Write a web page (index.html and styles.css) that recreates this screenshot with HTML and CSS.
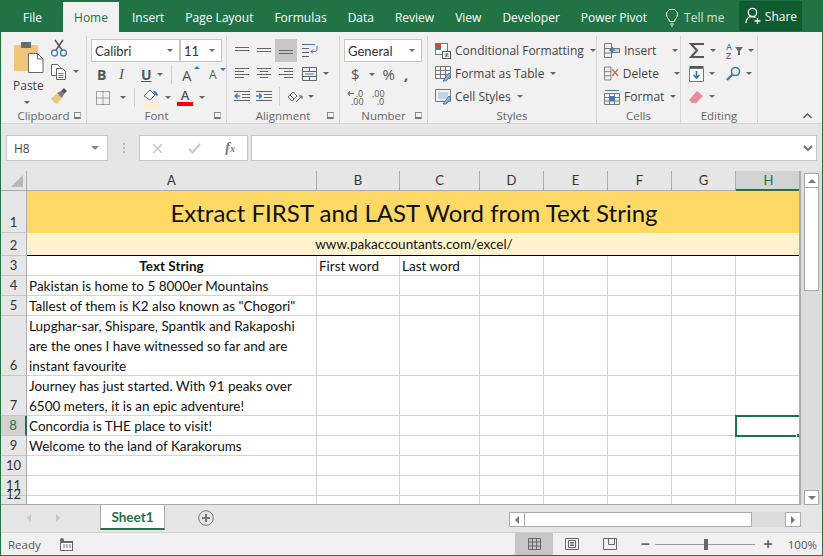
FILE: index.html
```html
<!DOCTYPE html>
<html lang="en">
<head>
    <meta charset="UTF-8">
    <title>Extract FIRST and LAST Word - Excel</title>
    <link rel="stylesheet" href="styles.css">
</head>
<body>
<div class="window">

    <div class="tabs">
        <span class="tab tab-file">File</span>
        <span class="tab tab-active">Home</span>
        <span class="tab">Insert</span>
        <span class="tab">Page Layout</span>
        <span class="tab">Formulas</span>
        <span class="tab">Data</span>
        <span class="tab">Review</span>
        <span class="tab">View</span>
        <span class="tab">Developer</span>
        <span class="tab">Power Pivot</span>
        <span class="tab tab-tell">
            <svg width="14" height="18" viewBox="0 0 14 18" fill="none" stroke="#fff"><path d="M4.5 12.5c0-2.500-3-3.500-3-7a5.500 5.500 0 0 1 11 0c0 3.500-3 4.500-3 7z"/><path d="M5 15h4M6 17h2"/></svg>
            Tell me
        </span>
        <span class="share">
            <svg width="16" height="18" viewBox="0 0 16 18" fill="none" stroke="#fff" stroke-width="1.300"><circle cx="7.500" cy="5.500" r="4.200"/><path d="M1 16c0-4 2.500-6.500 6-6.500 1.500 0 2.500.4 3.500 1"/><path d="M12.500 11v6M9.500 14h6"/></svg>
            Share
        </span>
    </div>

    <div class="ribbon">
        <div class="group g-clipboard">
            <div class="group-body clip-body">
                <div class="paste">
                    <svg width="30" height="32" viewBox="0 0 30 32"><rect x="0" y="3" width="24" height="26" rx="1" fill="#eec77c"/><rect x="7" y="0" width="10" height="6" fill="#6b6b6b"/><path d="M14.500 11.500h9l5.500 5.500v13.500h-14.500z" fill="#fff" stroke="#6b6b6b"/><path d="M23.500 11.500v5.500h5.500" fill="none" stroke="#6b6b6b"/></svg>
                    <span>Paste</span>
                    <i class="caret"></i>
                </div>
                <div class="clip-tools">
                    <span class="tool">
                        <svg width="16" height="18" viewBox="0 0 16 18" fill="none"><path d="M4 1l7 10M12 1L5 11" stroke="#555" stroke-width="1.500"/><circle cx="3.500" cy="14" r="3" stroke="#3f7cba" stroke-width="1.300"/><circle cx="12.500" cy="14" r="3" stroke="#3f7cba" stroke-width="1.300"/></svg>
                    </span>
                    <span class="tool">
                        <svg width="16" height="16" viewBox="0 0 16 16" fill="#fff" stroke="#666"><path d="M.5.500h6l3 3v8h-9z"/><path d="M5.500 4.500h6l3 3v8h-9z"/><path d="M7.500 9.500h5M7.500 11.500h5M7.500 13.500h5" stroke="#3f7cba"/></svg>
                        <i class="caret caret-copy"></i>
                    </span>
                    <span class="tool">
                        <svg width="17" height="16" viewBox="0 0 17 16"><path d="M0 11l6-6 5 5-5 6c-2-1-4-3-6-5z" fill="#eec77c"/><path d="M6 5l4-2 3 3-2 4z" fill="#777"/><path d="M10 3l3-3 3 3-3 3z" fill="#555"/></svg>
                    </span>
                </div>
            </div>
            <div class="group-label">Clipboard<i class="launcher"></i></div>
        </div>

        <div class="group g-font">
            <div class="group-body font-body">
                <div class="row combo-row">
                    <span class="combo combo-font">Calibri<i class="caret"></i></span>
                    <span class="combo combo-size">11<i class="caret"></i></span>
                </div>
                <div class="row font-row2">
                    <b class="glyph">B</b>
                    <em class="glyph glyph-i">I</em>
                    <u class="glyph">U</u>
                    <i class="caret caret-u"></i>
                    <span class="vsep"></span>
                    <span class="size-a">A<i class="tri tri-up"></i></span>
                    <span class="size-a size-a-small">A<i class="tri tri-down"></i></span>
                </div>
                <div class="row font-row3">
                    <svg width="14" height="14" viewBox="0 0 14 14" fill="none" stroke="#555" stroke-dasharray="1 1"><path d="M.5.500h13v13H.500zM7 .5v13M.5 7h13"/></svg>
                    <i class="caret caret-border"></i>
                    <span class="vsep"></span>
                    <svg class="fill-icon" width="18" height="19" viewBox="0 0 18 19"><path d="M2 8l6-6 5 5-5 5z" fill="#fff" stroke="#666"/><path d="M11 3c3 0 5 2 5 5l-3-1z" fill="#3f7cba"/><rect y="15" width="17" height="4" fill="#fdefc8"/></svg>
                    <i class="caret caret-fill"></i>
                    <span class="font-color">A</span>
                    <i class="caret caret-color"></i>
                </div>
            </div>
            <div class="group-label">Font<i class="launcher"></i></div>
        </div>

        <div class="group g-align">
            <div class="group-body align-body">
                <span class="cell-icon"><svg width="14" height="8" viewBox="0 0 14 8" stroke="#666"><path d="M0 .5h14M0 3.500h14"/></svg></span>
                <span class="cell-icon"><svg width="14" height="8" viewBox="0 0 14 8" stroke="#666"><path d="M0 1.500h14M0 4.500h14"/></svg></span>
                <span class="cell-icon cell-on"><svg width="14" height="8" viewBox="0 0 14 8" stroke="#666"><path d="M0 3.500h14M0 6.500h14"/></svg></span>
                <span class="cell-icon cell-wide">
                    <svg width="16" height="15" viewBox="0 0 16 15" fill="none" stroke="#666"><path d="M0 1.500h10M0 5.500h7M0 9.500h7M0 13.500h7"/><path d="M5 1.500h8" stroke="#3f7cba"/><path d="M15 3v3.500a2 2 0 0 1-2 2H9M11 6.500l-2 2 2 2" stroke="#3f7cba"/></svg>
                </span>

                <span class="cell-icon"><svg width="14" height="11" viewBox="0 0 14 11" stroke="#666"><path d="M0 .5h14M0 3.500h9M0 6.500h14M0 9.500h9"/></svg></span>
                <span class="cell-icon"><svg width="14" height="11" viewBox="0 0 14 11" stroke="#666"><path d="M0 .5h14M3 3.500h8M0 6.500h14M3 9.500h8"/></svg></span>
                <span class="cell-icon"><svg width="14" height="11" viewBox="0 0 14 11" stroke="#666"><path d="M0 .5h14M5 3.500h9M0 6.500h14M5 9.500h9"/></svg></span>
                <span class="cell-icon cell-wide">
                    <svg width="15" height="14" viewBox="0 0 15 14" fill="none" stroke="#666"><path d="M.5.500h14v13H.500zM.5 4.500h14M.5 9.500h14M7.500.5v4M7.500 9.500v4"/><path d="M3 7h9" stroke="#3f7cba"/></svg>
                    <i class="caret caret-merge"></i>
                </span>

                <span class="cell-icon"><svg width="16" height="11" viewBox="0 0 16 11" fill="none" stroke="#666"><path d="M0 .5h16M8 3.500h8M8 6.500h8M0 9.500h16"/><path d="M6 5H1M3.500 2.500L1 5l2.500 2.500" stroke="#3f7cba" stroke-width="1.300"/></svg></span>
                <span class="cell-icon"><svg width="16" height="11" viewBox="0 0 16 11" fill="none" stroke="#666"><path d="M0 .5h16M8 3.500h8M8 6.500h8M0 9.500h16"/><path d="M0 5h5M3 2.500L5.500 5 3 7.500" stroke="#3f7cba" stroke-width="1.300"/></svg></span>
                <span class="orient">
                    <span class="vsep"></span>
                    <svg width="16" height="15" viewBox="0 0 16 15" fill="none" stroke="#666"><path d="M1 8l5-5 4 4-5 5zM3 6l4 4"/><path d="M9 13l6-6M12 7h3v3" stroke="#555"/></svg>
                    <i class="caret caret-orient"></i>
                </span>
            </div>
            <div class="group-label">Alignment<i class="launcher"></i></div>
        </div>

        <div class="group g-number">
            <div class="group-body number-body">
                <span class="combo combo-general">General<i class="caret"></i></span>
                <div class="row number-row2">
                    <span class="num-sign">$</span>
                    <i class="caret caret-dollar"></i>
                    <span class="num-sign num-pct">%</span>
                    <span class="num-sign num-comma">,</span>
                </div>
                <div class="row number-row3">
                    <svg width="15" height="15" viewBox="0 0 15 15" fill="none" stroke="#3f7cba" stroke-width="1.200"><path d="M7 3.500H1M3 1.500l-2 2 2 2"/></svg>
                    <span class="decimals"><span>&nbsp;&nbsp;.0</span><span>.00</span></span>
                    <span class="decimals decimals-b"><span>.00</span><span>&nbsp;&nbsp;.0</span></span>
                </div>
            </div>
            <div class="group-label">Number<i class="launcher"></i></div>
        </div>

        <div class="group g-styles">
            <div class="group-body list-body">
                <span class="list-item">
                    <svg width="16" height="16" viewBox="0 0 16 16" fill="none"><rect x=".5" y=".5" width="12" height="11" stroke="#777" fill="#fff"/><rect x="1" y="1" width="5" height="3" fill="#d24726"/><rect x="1" y="4" width="5" height="3" fill="#3f7cba"/><rect x="7.500" y="8.500" width="8" height="7" fill="#fff" stroke="#555"/><path d="M9.500 11h4M9.500 13h4M12.500 10l-2 4.500" stroke="#555" stroke-width=".8"/></svg>
                    Conditional Formatting<i class="caret caret-list"></i>
                </span>
                <span class="list-item">
                    <svg width="16" height="16" viewBox="0 0 16 16" fill="none" stroke="#777"><path d="M.5.500h15v12H.500zM.5 4.500h15M.5 8.500h15M5.500.5v12M10.500.5v12"/><path d="M8 15l6-8 2 2-5 6z" fill="#8fb3d9" stroke="#3f7cba"/></svg>
                    Format as Table<i class="caret caret-list"></i>
                </span>
                <span class="list-item">
                    <svg width="16" height="16" viewBox="0 0 16 16" fill="none" stroke="#777"><path d="M.5.500h15v12H.500z"/><rect x="3" y="3" width="10" height="7" fill="#c3d3e6" stroke="none"/><path d="M8 15l6-8 2 2-5 6z" fill="#8fb3d9" stroke="#3f7cba"/></svg>
                    Cell Styles<i class="caret caret-list"></i>
                </span>
            </div>
            <div class="group-label">Styles</div>
        </div>

        <div class="group g-cells">
            <div class="group-body list-body">
                <span class="list-item">
                    <svg width="16" height="15" viewBox="0 0 16 15" fill="none" stroke="#777"><path d="M.5.500h7v14h-7zM.5 5.500h7M.5 10h7"/><rect x="8.500" y="5.500" width="7" height="4" fill="#c3d3e6"/><path d="M9 4L6 7l3 3M6 7h5" stroke="#3f7cba" stroke-width="1.300"/></svg>
                    Insert<i class="caret caret-insert"></i>
                </span>
                <span class="list-item">
                    <svg width="16" height="15" viewBox="0 0 16 15" fill="none" stroke="#777"><path d="M.5.500h7v14h-7zM.5 5.500h7M.5 10h7"/><path d="M9 3l6 7M15 3l-6 7" stroke="#d2683c" stroke-width="1.500"/></svg>
                    Delete<i class="caret caret-delete"></i>
                </span>
                <span class="list-item">
                    <svg width="16" height="16" viewBox="0 0 16 16" fill="none" stroke="#777"><path d="M.5 4.500h15v11H.500zM.5 8.500h15M.5 12h15M5.500 4.500v11M10.500 4.500v11"/><rect x="5" y="7" width="6" height="5" fill="#3f7cba" stroke="none"/><path d="M1 1.500h14" stroke="#3f7cba"/></svg>
                    Format<i class="caret caret-list"></i>
                </span>
            </div>
            <div class="group-label">Cells</div>
        </div>

        <div class="group g-editing">
            <div class="group-body edit-body">
                <span class="edit-item">
                    <svg width="16" height="15" viewBox="0 0 16 15" fill="none" stroke="#555" stroke-width="2"><path d="M15 1H2l6 6.500L2 14h13"/></svg>
                    <i class="caret"></i>
                </span>
                <span class="edit-item">
                    <span class="az"><span class="az-a">A</span><span class="az-z">Z</span></span>
                    <svg width="8" height="8" viewBox="0 0 8 8"><path d="M0 0h8L5 4v4H3V4z" fill="#666"/></svg>
                    <i class="caret"></i>
                </span>
                <span class="edit-item">
                    <svg width="15" height="16" viewBox="0 0 15 16" fill="#fff" stroke="#777"><path d="M.5 2.500h14v13H.500z"/><path d="M.5 1h14" stroke="#555" stroke-width="2"/><path d="M7.500 5v7M4.500 9l3 3 3-3" fill="none" stroke="#2f6fb3" stroke-width="1.600"/></svg>
                    <i class="caret"></i>
                </span>
                <span class="edit-item">
                    <svg width="15" height="15" viewBox="0 0 15 15" fill="none" stroke="#3f7cba" stroke-width="1.600"><circle cx="9.500" cy="5.500" r="4"/><path d="M6.500 8.500L1 14" stroke-width="2.400"/></svg>
                    <i class="caret"></i>
                </span>
                <span class="edit-item">
                    <svg width="15" height="14" viewBox="0 0 15 14"><path d="M0 10l8-9 6 5-7 7H3z" fill="#ea8a9a"/></svg>
                    <i class="caret"></i>
                </span>
            </div>
            <div class="group-label">Editing</div>
        </div>

        <div class="collapse">
            <svg width="9" height="6" viewBox="0 0 9 6" fill="none" stroke="#666" stroke-width="1.600"><path d="M.5 5L4.500 1l4 4"/></svg>
        </div>
    </div>

    <div class="formula-bar">
        <div class="name-box">H8<i class="caret"></i></div>
        <div class="grip"><i></i><i></i><i></i></div>
        <div class="fx-box">
            <svg width="11" height="11" viewBox="0 0 11 11" fill="none" stroke="#c8c8c8" stroke-width="1.500"><path d="M1 1l9 9M10 1l-9 9"/></svg>
            <svg width="13" height="11" viewBox="0 0 13 11" fill="none" stroke="#c8c8c8" stroke-width="2"><path d="M1 6l3.500 3.500L12 1"/></svg>
            <span class="fx">f<small>x</small></span>
        </div>
        <div class="formula-input">
            <svg width="10" height="7" viewBox="0 0 10 7" fill="none" stroke="#777" stroke-width="2"><path d="M1 1l4 4 4-4"/></svg>
        </div>
    </div>

    <div class="sheet-wrap">
        <div class="sheet">
            <div class="corner"><i></i></div>
            <div class="col">A</div><div class="col">B</div><div class="col">C</div><div class="col">D</div><div class="col">E</div><div class="col">F</div><div class="col">G</div><div class="col col-on">H</div>

            <div class="rowh">1</div>
            <div class="title-cell">Extract FIRST and LAST Word from Text String</div>

            <div class="rowh">2</div>
            <div class="url-cell">www.pakaccountants.com/excel/</div>

            <div class="rowh">3</div>
            <div class="c head">Text String</div><div class="c">First word</div><div class="c">Last word</div><div class="c"></div><div class="c"></div><div class="c"></div><div class="c"></div><div class="c"></div>

            <div class="rowh">4</div>
            <div class="c">Pakistan is home to 5 8000er Mountains</div><div class="c"></div><div class="c"></div><div class="c"></div><div class="c"></div><div class="c"></div><div class="c"></div><div class="c"></div>

            <div class="rowh">5</div>
            <div class="c">Tallest of them is K2 also known as "Chogori"</div><div class="c"></div><div class="c"></div><div class="c"></div><div class="c"></div><div class="c"></div><div class="c"></div><div class="c"></div>

            <div class="rowh">6</div>
            <div class="c">Lupghar-sar, Shispare, Spantik and Rakaposhi are the ones I have witnessed so far and are instant favourite</div><div class="c"></div><div class="c"></div><div class="c"></div><div class="c"></div><div class="c"></div><div class="c"></div><div class="c"></div>

            <div class="rowh">7</div>
            <div class="c">Journey has just started. With 91 peaks over 6500 meters, it is an epic adventure!</div><div class="c"></div><div class="c"></div><div class="c"></div><div class="c"></div><div class="c"></div><div class="c"></div><div class="c"></div>

            <div class="rowh rowh-on">8</div>
            <div class="c">Concordia is THE place to visit!</div><div class="c"></div><div class="c"></div><div class="c"></div><div class="c"></div><div class="c"></div><div class="c"></div><div class="c selected"><i class="handle"></i></div>

            <div class="rowh">9</div>
            <div class="c">Welcome to the land of Karakorums</div><div class="c"></div><div class="c"></div><div class="c"></div><div class="c"></div><div class="c"></div><div class="c"></div><div class="c"></div>

            <div class="rowh">10</div>
            <div class="c"></div><div class="c"></div><div class="c"></div><div class="c"></div><div class="c"></div><div class="c"></div><div class="c"></div><div class="c"></div>

            <div class="rowh">11</div>
            <div class="c"></div><div class="c"></div><div class="c"></div><div class="c"></div><div class="c"></div><div class="c"></div><div class="c"></div><div class="c"></div>

            <div class="rowh">12</div>
            <div class="c"></div><div class="c"></div><div class="c"></div><div class="c"></div><div class="c"></div><div class="c"></div><div class="c"></div><div class="c"></div>
        </div>
        <div class="vscroll">
            <span class="sb-btn"><i class="tri-sb tri-sb-up"></i></span>
            <span class="vthumb"></span>
            <span class="sb-btn sb-down"><i class="tri-sb tri-sb-down"></i></span>
        </div>
    </div>

    <div class="sheet-tabs">
        <i class="nav nav-l"></i>
        <i class="nav nav-r"></i>
        <span class="sheet-tab">Sheet1</span>
        <svg class="add-sheet" width="16" height="16" viewBox="0 0 16 16" fill="none" stroke="#777"><circle cx="8" cy="8" r="7.300"/><path d="M8 4v8M4 8h8" stroke-width="2"/></svg>
        <div class="hscroll">
            <span class="sb-btn-h"><i class="tri-sb tri-sb-left"></i></span>
            <span class="hthumb"></span>
            <span class="sb-btn-h sb-right"><i class="tri-sb tri-sb-right"></i></span>
        </div>
    </div>

    <div class="status">
        <span class="ready">Ready</span>
        <svg class="macro" width="13" height="13" viewBox="0 0 13 13"><path d="M0 3h13v10H0z" fill="#666"/><path d="M1 5h11v7H1z" fill="#fff"/><rect width="4" height="4" rx="2" x="0" fill="#666"/><path d="M3 7h2M6 7h2M9 7h2M3 9h2M6 9h2M9 9h2" stroke="#666"/></svg>
        <div class="views">
            <span class="view view-on"><svg width="13" height="12" viewBox="0 0 13 12" fill="none" stroke="#666"><path d="M.5.500h12v11H.500zM.5 4h12M.5 8h12M4.500.5v11M8.500.5v11"/></svg></span>
            <span class="view"><svg width="14" height="12" viewBox="0 0 14 12" fill="none" stroke="#666"><path d="M.5.500h13v11H.500zM3.500 2.500h7v7h-7zM5 4.500h4M5 6h4M5 7.500h4"/></svg></span>
            <span class="view"><svg width="14" height="12" viewBox="0 0 14 12" fill="none" stroke="#666"><path d="M.5 11.500V.5h13v11zM5.500.5v6h6V.5"/></svg></span>
        </div>
        <span class="zoom-btn">&minus;</span>
        <div class="zoom-track"><i></i></div>
        <span class="zoom-btn">+</span>
        <span class="zoom-val">100%</span>
    </div>
</div>
</body>
</html>
```

FILE: styles.css
```css
* {
    box-sizing: border-box;
}

body {
    margin: 0;
    overflow: hidden;
    background-color: #e6e6e6;
    font-family: "Open Sans", "Noto Sans", sans-serif;
    font-size: 12px;
    color: #444;
}

i {
    font-style: normal;
}

.window {
    width: 823px;
    height: 556px;
    display: flex;
    flex-direction: column;
    border-left: 1px solid #217346;
    border-right: 1px solid #217346;
    border-bottom: 1px solid #217346;
}

/* tab strip */
.tabs {
    height: 32px;
    flex: none;
    margin: 0 -1px;
    display: flex;
    align-items: flex-end;
    background-color: #217346;
    color: #fff;
    font-size: 12px;
}
.tab {
    height: 30px;
    padding-top: 7px;
    margin-right: 21px;
    white-space: nowrap;
}
.tab-file {
    margin-left: 23px;
    margin-right: 22px;
}
.tab-active {
    width: 56px;
    margin-left: -1px;
    margin-right: 13px;
    text-align: center;
    background-color: #f1f1f1;
    color: #217346;
}
.tab-tell {
    display: flex;
    align-items: flex-start;
    gap: 5px;
    margin-left: -3px;
    margin-right: 15px;
    color: #d5e6dc;
}
.share {
    width: 63px;
    height: 30px;
    margin-bottom: 1px;
    display: flex;
    align-items: center;
    justify-content: center;
    gap: 4px;
    background-color: #0f5c30;
}

/* ribbon */
.ribbon {
    height: 92px;
    flex: none;
    display: flex;
    background-color: #f1f1f1;
    border-bottom: 1px solid #d6d6d6;
    position: relative;
}
.group {
    display: flex;
    flex-direction: column;
    padding-top: 3px;
    height: 88px;
    margin-top: 4px;
    border-right: 1px solid #d4d4d4;
    flex: none;
}
.g-clipboard { width: 86px; }
.g-font { width: 140px; }
.g-align { width: 113px; }
.g-number { width: 88px; }
.g-styles { width: 169px; }
.g-cells { width: 84px; }
.g-editing { width: 77px; }
.group-body {
    height: 71px;
    flex: none;
}
.group-label {
    position: relative;
    height: 14px;
    line-height: 14px;
    text-align: center;
    color: #666;
    font-size: 11.500px;
    margin-top: -1px;
}
.launcher {
    position: absolute;
    right: 5px;
    top: 3px;
    width: 7px;
    height: 7px;
    border-left: 1px solid #888;
    border-top: 1px solid #888;
    border-right: 1px solid #bbb;
    border-bottom: 2px solid #777;
}
.caret {
    display: inline-block;
    width: 0;
    height: 0;
    border-left: 3px solid transparent;
    border-right: 3px solid transparent;
    border-top: 3px solid #666;
}
.row {
    display: flex;
    align-items: center;
}
.vsep {
    display: inline-block;
    width: 1px;
    height: 19px;
    background-color: #d0d0d0;
}

/* clipboard */
.clip-body {
    display: flex;
}
.paste {
    width: 45px;
    padding-left: 13px;
    padding-top: 0;
    flex: none;
    display: flex;
    flex-direction: column;
    align-items: flex-start;
    color: #444;
}
.paste svg {
    margin-top: 3px;
}
.paste span {
    margin: 4px 0 0 -1px;
    font-size: 12px;
    line-height: 16px;
}
.paste .caret {
    margin: 7px 0 0 10px;
}
.clip-tools {
    display: flex;
    flex-direction: column;
    padding-left: 5px;
    gap: 7px;
}
.tool {
    height: 17px;
    display: flex;
    align-items: center;
}
.caret-copy {
    margin-left: 6px;
}

/* font */
.font-body {
    padding-left: 4px;
}
.combo {
    display: flex;
    align-items: center;
    justify-content: space-between;
    height: 23px;
    padding: 0 6px 0 3px;
    background-color: #fff;
    border: 1px solid #c6c6c6;
    font-family: "Lato", sans-serif;
    font-size: 13px;
    color: #333;
}
.combo-row {
    margin-bottom: 0;
}
.combo-font {
    width: 89px;
}
.combo-size {
    width: 42px;
    margin-left: 0;
    border-left: 1px solid #c6c6c6;
}
.font-row2 {
    height: 23px;
    margin-top: 1px;
    padding-left: 5px;
}
.glyph {
    width: 22px;
    padding-left: 1px;
    font-family: "Liberation Serif", serif;
    font-size: 14px;
    font-weight: bold;
    font-family: "Open Sans", sans-serif;
    color: #555;
}
.glyph-i {
    font-weight: normal;
    font-family: "Liberation Serif", serif;
    font-size: 15px;
}
.caret-u {
    margin-left: -5px;
}
.font-row2 .vsep {
    margin-left: 8px;
}
.size-a {
    position: relative;
    margin-left: 10px;
    width: 22px;
    font-size: 15px;
    color: #555;
}
.size-a-small {
    margin-left: 0;
    padding-left: 5px;
    font-size: 12px;
}
.tri {
    position: absolute;
    top: 0;
    right: 4px;
    width: 0;
    height: 0;
    border-left: 3px solid transparent;
    border-right: 3px solid transparent;
}
.tri-up {
    top: 1px;
    border-bottom: 3px solid #3f7cba;
}
.tri-down {
    right: 0;
    top: 2px;
    border-top: 3px solid #3f7cba;
}
.font-row3 {
    height: 23px;
    padding-left: 5px;
}
.caret-border {
    margin-left: 10px;
}
.font-row3 .vsep {
    margin-left: 8px;
}
.fill-icon {
    margin-left: 7px;
}
.caret-fill {
    margin-left: 5px;
}
.font-color {
    width: 16px;
    margin-left: 6px;
    text-align: center;
    font-size: 13px;
    line-height: 13px;
    font-weight: 600;
    color: #555;
    border-bottom: 4px solid #f00;
}
.caret-color {
    margin-left: 6px;
}

/* alignment */
.align-body {
    display: grid;
    grid-template-columns: 22px 22px 22px 34px;
    grid-auto-rows: 23px;
    padding-left: 4px;
}
.cell-icon {
    display: flex;
    align-items: center;
    justify-content: center;
}
.cell-on {
    background-color: #c6c6c6;
}
.cell-wide {
    justify-content: flex-start;
    padding-left: 5px;
    gap: 5px;
}
.orient {
    grid-column: span 2;
    display: flex;
    align-items: center;
    gap: 7px;
    padding-left: 4px;
}
.caret-orient {
    margin-left: -2px;
}
.caret-merge {
    margin-left: 1px;
}

/* number */
.number-body {
    padding-left: 4px;
}
.combo-general {
    width: 78px;
    font-size: 13px;
}
.number-row2 {
    height: 24px;
    padding-left: 7px;
}
.num-sign {
    font-size: 15px;
    color: #555;
}
.caret-dollar {
    margin-left: 9px;
}
.num-pct {
    margin-left: 8px;
}
.num-comma {
    margin-left: 9px;
    font-weight: bold;
}
.number-row3 {
    height: 23px;
    padding-left: 3px;
    position: relative;
}
.number-row3 svg {
    position: absolute;
    left: 3px;
    top: 4px;
}
.decimals {
    display: flex;
    flex-direction: column;
    margin-left: 2px;
    width: 21px;
    padding-left: 2px;
    font-size: 9px;
    line-height: 8px;
    white-space: pre;
    color: #555;
}
.decimals-b {
    margin-left: 0;
}

/* styles and cells */
.list-body {
    display: flex;
    flex-direction: column;
    padding-left: 7px;
}
.list-item {
    height: 23px;
    display: flex;
    align-items: center;
    gap: 4px;
    color: #444;
    white-space: nowrap;
}
.caret-list {
    margin-left: 2px;
}
.caret-insert {
    margin-left: 12px;
}
.caret-delete {
    margin-left: 11px;
}

/* editing */
.edit-body {
    display: grid;
    grid-template-columns: 37px 36px;
    grid-auto-rows: 23px;
    padding-left: 8px;
}
.edit-item {
    display: flex;
    align-items: center;
    gap: 5px;
}
.az {
    display: flex;
    flex-direction: column;
    width: 7px;
    font-size: 9px;
    line-height: 9px;
    font-weight: 600;
}
.az-a { color: #3f7cba; }
.az-z { color: #8a4fa8; }
.edit-item .az + svg {
    margin-left: -3px;
}
.collapse {
    position: absolute;
    right: 10px;
    bottom: 4px;
    line-height: 6px;
}

/* formula bar */
.formula-bar {
    height: 47px;
    flex: none;
    padding: 11px 5px 10px 5px;
    display: flex;
}
.name-box {
    width: 102px;
    display: flex;
    align-items: center;
    justify-content: space-between;
    padding: 0 8px 0 7px;
    background-color: #fff;
    border: 1px solid #c6c6c6;
    font-size: 12px;
    color: #444;
}
.name-box .caret {
    border-left-width: 4px;
    border-right-width: 4px;
    border-top-width: 4px;
    border-top-color: #888;
}
.grip {
    width: 31px;
    display: flex;
    flex-direction: column;
    align-items: center;
    justify-content: center;
    gap: 2px;
}
.grip i {
    width: 2px;
    height: 2px;
    background-color: #b5b5b5;
}
.fx-box {
    width: 109px;
    padding: 0 12px;
    display: flex;
    align-items: center;
    justify-content: space-between;
    background-color: #fff;
    border: 1px solid #c6c6c6;
}
.fx {
    font-family: "Liberation Serif", serif;
    font-style: italic;
    font-weight: bold;
    font-size: 14px;
    color: #777;
}
.fx small {
    font-size: 10px;
}
.formula-input {
    flex: 1;
    margin-left: 3px;
    display: flex;
    align-items: center;
    justify-content: flex-end;
    padding-right: 3px;
    background-color: #fff;
    border: 1px solid #c6c6c6;
}

/* sheet */
.sheet-wrap {
    height: 334px;
    flex: none;
    display: flex;
}
.sheet {
    width: 800px;
    display: grid;
    grid-template-columns: 26px 290px 83px 80px 64px 64px 64px 64px 65px;
    grid-template-rows: 20px 42px 23px 20px 20px 20px 60px 40px 20px 20px 20px 20px 9px;
    overflow: hidden;
    border-right: 2px solid #ababab;
    border-bottom: 1px solid #ababab;
    background-color: #fff;
    font-family: "Lato", "Carlito", sans-serif;
    font-size: 13.500px;
    color: #111;
}
.corner {
    display: flex;
    align-items: flex-end;
    justify-content: flex-end;
    padding: 0 3px 3px 0;
    background-color: #e6e6e6;
    border-right: 1px solid #ababab;
    border-bottom: 1px solid #ababab;
}
.corner i {
    width: 0;
    height: 0;
    border-left: 12px solid transparent;
    border-bottom: 12px solid #b8b8b8;
}
.col {
    background-color: #e6e6e6;
    border-right: 1px solid #ababab;
    border-bottom: 1px solid #ababab;
    text-align: center;
    line-height: 19px;
    color: #333;
    font-size: 13px;
}
.col-on {
    background-color: #d2d2d2;
    border-bottom: 2px solid #217346;
    color: #217346;
    border-right: none;
}
.rowh {
    display: flex;
    align-items: flex-end;
    justify-content: center;
    padding-bottom: 1px;
    background-color: #e6e6e6;
    border-right: 1px solid #ababab;
    border-bottom: 1px solid #c6c6c6;
    line-height: 18px;
    color: #333;
    font-size: 13px;
}
.rowh-on {
    background-color: #d2d2d2;
    color: #217346;
    border-right: 2px solid #217346;
}
.title-cell {
    grid-column: 2 / -1;
    background-color: #ffd966;
    text-align: center;
    line-height: 43px;
    font-size: 24px;
    color: #111;
}
.url-cell {
    grid-column: 2 / -1;
    background-color: #fff2cc;
    border-bottom: 1px solid #000;
    text-align: center;
    line-height: 23px;
}
.c {
    padding: 0 2px;
    border-right: 1px solid #d4d4d4;
    border-bottom: 1px solid #d4d4d4;
    line-height: 20px;
    align-self: stretch;
}
.head {
    text-align: center;
    font-weight: bold;
}
.selected {
    position: relative;
    border: 2px solid #217346;
    margin: -1px 0 -1px -1px;
}
.handle {
    position: absolute;
    right: -2px;
    bottom: -3px;
    width: 5px;
    height: 5px;
    background-color: #217346;
    border: 1px solid #fff;
    border-right: none;
}

/* scroll bars */
.vscroll {
    width: 21px;
    flex: none;
    padding: 2px 3px 0 3px;
    display: flex;
    flex-direction: column;
    background-color: #dcdcdc;
}
.sb-btn {
    height: 15px;
    flex: none;
    display: flex;
    align-items: center;
    justify-content: center;
    background-color: #fff;
    border: 1px solid #ababab;
}
.sb-down {
    margin-top: auto;
    margin-bottom: 0;
}
.vthumb {
    height: 104px;
    margin-top: -1px;
    background-color: #fff;
    border: 1px solid #ababab;
}
.tri-sb {
    width: 0;
    height: 0;
    border: 4px solid transparent;
}
.tri-sb-up {
    border-bottom-color: #777;
    border-top: none;
}
.tri-sb-down {
    border-top-color: #777;
    border-bottom: none;
}
.tri-sb-left {
    border-right-color: #777;
    border-left: none;
}
.tri-sb-right {
    border-left-color: #777;
    border-right: none;
}
.sheet-tabs {
    height: 28px;
    flex: none;
    display: flex;
    align-items: flex-start;
    border-bottom: 1px solid #d0d0d0;
    position: relative;
}
.nav {
    margin-top: 9px;
    width: 0;
    height: 0;
    border: 4px solid transparent;
}
.nav-l {
    margin-left: 26px;
    border-right-color: #c8c8c8;
    border-left: none;
}
.nav-r {
    margin-left: 25px;
    border-left-color: #c8c8c8;
    border-right: none;
}
.sheet-tab {
    width: 65px;
    height: 25px;
    margin-left: 40px;
    text-align: center;
    line-height: 24px;
    background-color: #fff;
    border-left: 1px solid #ababab;
    border-right: 1px solid #ababab;
    border-bottom: 2px solid #217346;
    color: #217346;
    font-family: "Lato", sans-serif;
    font-weight: bold;
    font-size: 13.500px;
}
.add-sheet {
    margin: 5px 0 0 33px;
}
.hscroll {
    width: 292px;
    height: 15px;
    margin: 7px 0 0 auto;
    margin-right: 21px;
    display: flex;
    background-color: #dcdcdc;
}
.sb-btn-h {
    width: 16px;
    height: 15px;
    flex: none;
    display: flex;
    align-items: center;
    justify-content: center;
    background-color: #fff;
    border: 1px solid #ababab;
}
.sb-right {
    margin-left: auto;
}
.hthumb {
    width: 228px;
    margin-left: -1px;
    background-color: #fff;
    border: 1px solid #ababab;
}

/* status bar */
.status {
    flex: 1;
    display: flex;
    align-items: center;
    background-color: #f1f1f1;
    color: #555;
    font-size: 11.500px;
}
.ready {
    margin-left: 7px;
}
.macro {
    margin-left: 19px;
}
.views {
    display: flex;
    margin-left: auto;
    align-self: stretch;
}
.view {
    width: 38px;
    display: flex;
    align-items: center;
    justify-content: center;
}
.view-on {
    background-color: #c6c6c6;
}
.zoom-btn {
    width: 10px;
    text-align: center;
    font-size: 16px;
    font-weight: bold;
    color: #666;
    margin: 0 0 0 11px;
}
.zoom-track {
    position: relative;
    width: 100px;
    height: 1px;
    margin-left: 5px;
    margin-right: -3px;
    background-color: #999;
}
.zoom-track i {
    position: absolute;
    left: 49px;
    top: -5px;
    width: 4px;
    height: 11px;
    background-color: #666;
}
.zoom-val {
    width: 41px;
    margin-left: 8px;
    text-align: right;
    padding-right: 5px;
}
```
